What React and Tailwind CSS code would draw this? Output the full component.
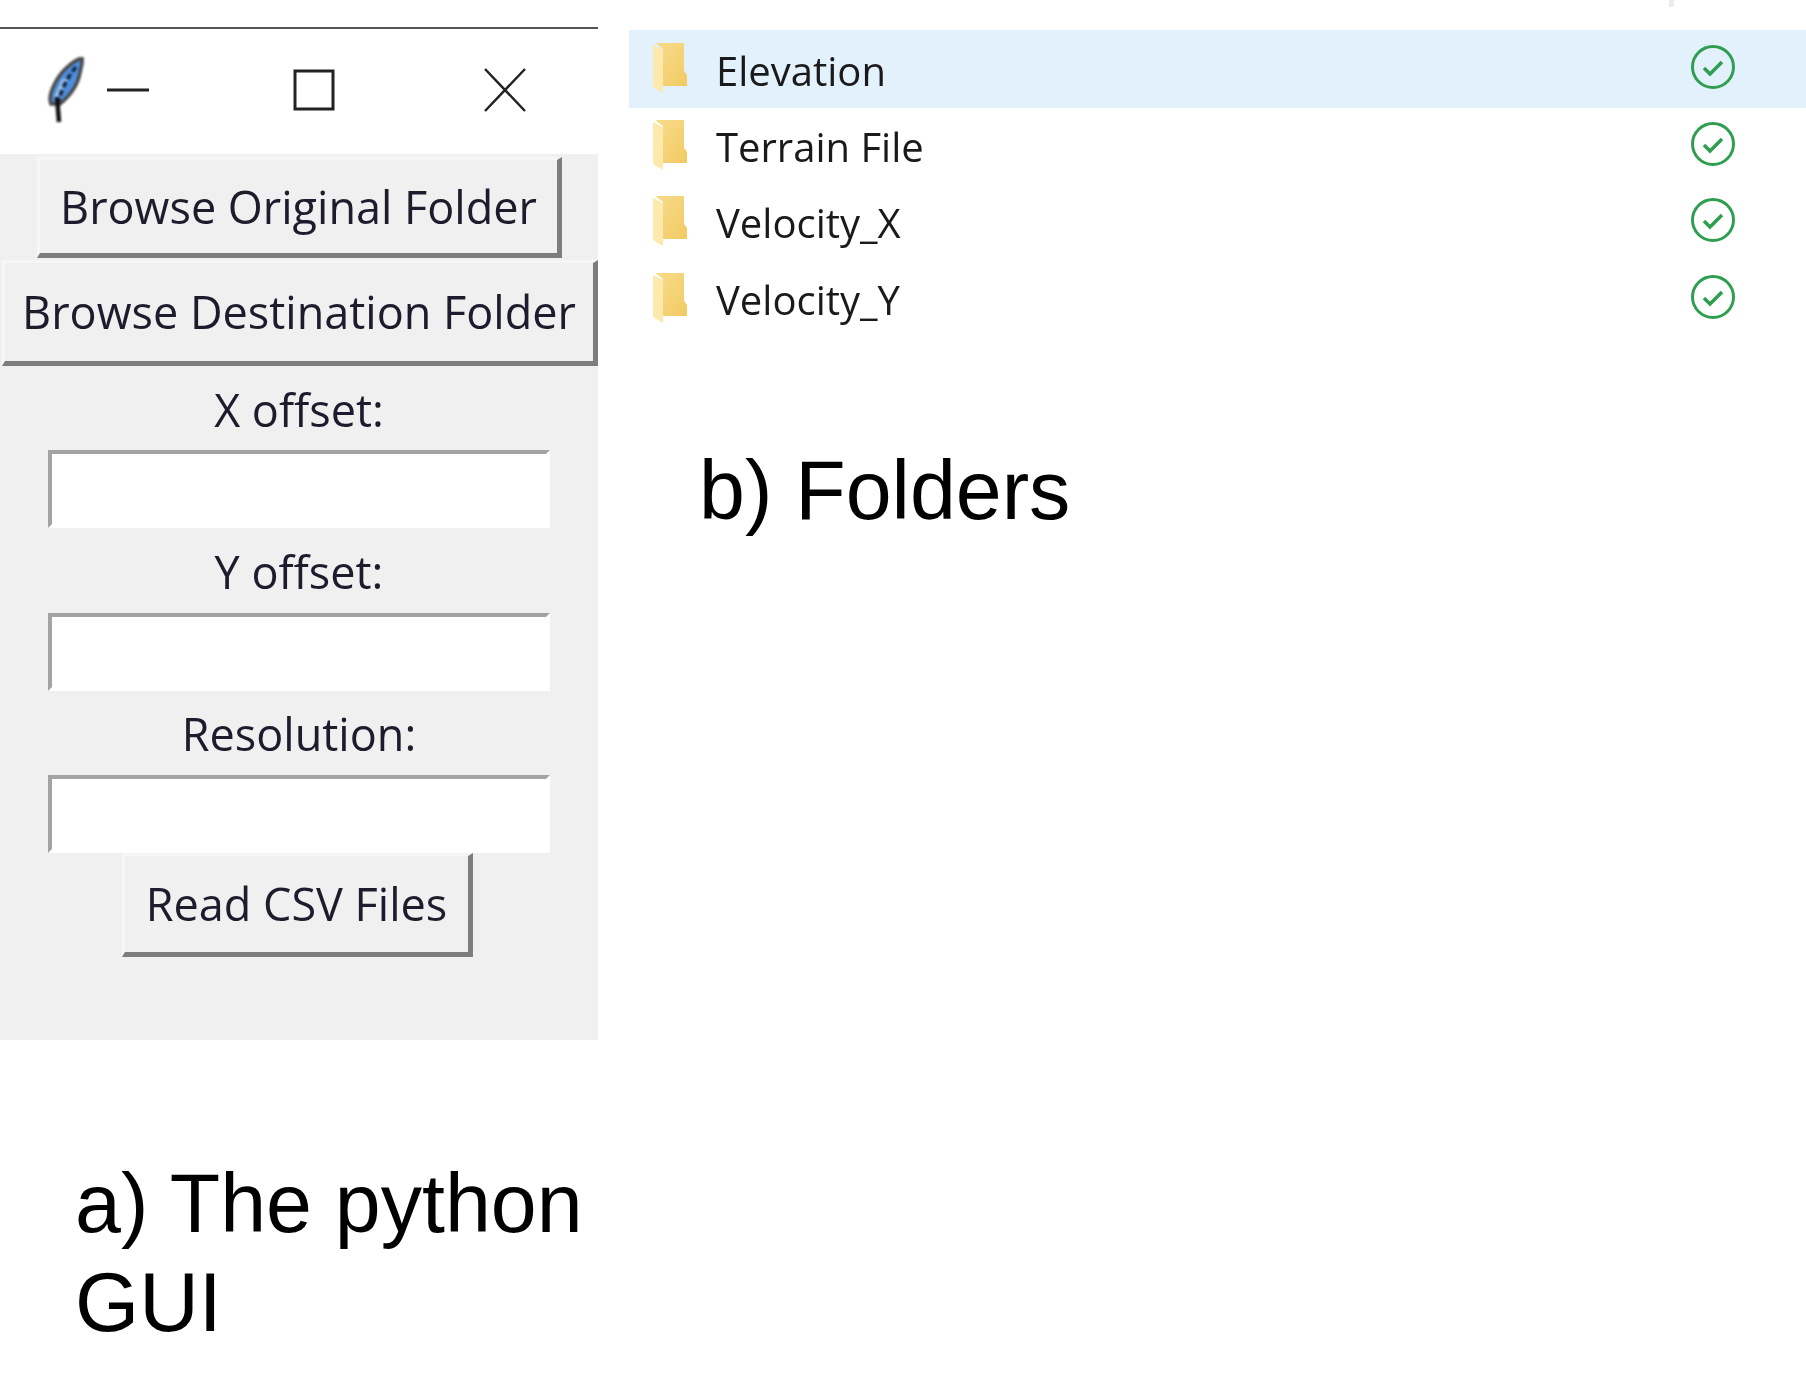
import React from "react";

const uiFont = "[font-family:'Open_Sans','Noto_Sans',sans-serif]";

const folders = ["Elevation", "Terrain File", "Velocity_X", "Velocity_Y"];

function Feather() {
  return (
    <svg width="40" height="66" viewBox="0 0 40 66" className="blur-[0.9px]">
      <path d="M36 1 C26 4 14 15 8 28 C4 36 3 42 5 47 L14 47 C25 38 32 27 34 16 C35 10 37 6 36 1 Z" fill="#4f8edc" stroke="#4a4a4a" strokeWidth="3.5" />
      <path d="M16 22 L8 40 L12 42 L22 22 Z" fill="#9cc0ec" />
      <path d="M30 10 C22 20 16 30 12 46" fill="none" stroke="#15233a" strokeWidth="3.5" strokeDasharray="6 3" />
      <path d="M11 40 L13 65" stroke="#111" strokeWidth="4.5" />
    </svg>
  );
}

function WinButton({ children, width }) {
  return (
    <svg width={width} height="46" viewBox={`0 0 ${width} 46`} className="blur-[0.4px]" fill="none" stroke="#222">
      {children}
    </svg>
  );
}

function TkButton({ label, className }) {
  return (
    <button className={`block bg-[#f0f0f0] border-t-[3px] border-l-[3px] border-r-[5px] border-b-[5px] border-t-[#f6f6f6] border-l-[#f6f6f6] border-r-[#7d7d7d] border-b-[#7d7d7d] text-[#1c1c2c] text-[45px] font-medium text-center whitespace-nowrap blur-[0.5px] ${className}`}>
      {label}
    </button>
  );
}

function Entry() {
  return (
    <div className="mx-auto w-[502px] h-[78px] bg-white border-4 border-t-[#a3a3a3] border-l-[#a3a3a3] border-r-white border-b-white blur-[0.4px]" />
  );
}

function FieldLabel({ children }) {
  return (
    <div className="h-[84.4px] flex items-center justify-center pt-[2px] text-[#1c1c2c] text-[45px] font-medium leading-none">
      <span className="blur-[0.5px]">{children}</span>
    </div>
  );
}

function FolderIcon() {
  return (
    <svg width="34" height="50" viewBox="0 0 34 50" className="blur-[0.6px] shrink-0">
      <defs>
        <linearGradient id="folderBack" x1="0" y1="0" x2="1" y2="1">
          <stop offset="0" stopColor="#f8dc8c" />
          <stop offset="1" stopColor="#f2ca62" />
        </linearGradient>
      </defs>
      <path d="M2 0 H31 V28 L34 32 V43 H10 V6 Z" fill="url(#folderBack)" />
      <path d="M0 2 L10 7 V50 L0 44 Z" fill="#fde9ab" />
    </svg>
  );
}

function CheckCircleIcon() {
  return (
    <svg width="46" height="46" viewBox="0 0 46 46" fill="none" stroke="#2f9e50" className="blur-[0.4px] shrink-0">
      <circle cx="23" cy="23" r="20.5" strokeWidth="3" />
      <path d="M14 24 L20 30 L32 18" strokeWidth="3.5" />
    </svg>
  );
}

export default function App() {
  return (
    <div className={`relative flex w-[1806px] h-[1400px] bg-white ${uiFont}`}>
      {/* Left side: python GUI */}
      <div className="w-[598px] shrink-0 pt-[27px]">
        <div className="h-[2px] bg-[#555]" />

        {/* Title bar */}
        <div className="h-[125px] flex items-center pb-[3px]">
          <div className="ml-[46px] w-[40px]">
            <Feather />
          </div>
          <div className="ml-[20px]">
            <WinButton width={44}>
              <path d="M1 23 H43" strokeWidth="3" />
            </WinButton>
          </div>
          <div className="ml-[143px]">
            <WinButton width={42}>
              <rect x="2" y="4" width="38" height="38" strokeWidth="3" />
            </WinButton>
          </div>
          <div className="ml-[148px]">
            <WinButton width={44}>
              <path d="M2 2 L42 44 M42 2 L2 44" strokeWidth="2.5" />
            </WinButton>
          </div>
        </div>

        {/* Window body */}
        <div className="h-[886px] bg-[#f0f0f0] pt-[3px]">
          <TkButton label="Browse Original Folder" className="ml-[37px] w-[525px] h-[101px]" />
          <TkButton label="Browse Destination Folder" className="ml-[2px] mt-[2px] w-[596px] h-[106px]" />
          <FieldLabel>X offset:</FieldLabel>
          <Entry />
          <FieldLabel>Y offset:</FieldLabel>
          <Entry />
          <FieldLabel>Resolution:</FieldLabel>
          <Entry />
          <TkButton label="Read CSV Files" className="ml-[122px] w-[351px] h-[104px]" />
        </div>

        <div className="mt-[114px] pl-[75px] [font-family:'Liberation_Sans',Arial,sans-serif] text-[82.5px] leading-[99px] text-black">
          a) The python
          <br />
          GUI
        </div>
      </div>

      {/* Right side: folders */}
      <div className="flex-1 ml-[31px] pt-[30px]">
        <div className="absolute top-0 left-[1669px] w-[5px] h-[7px] bg-[#ececec]" />
        {folders.map((name, i) => (
          <div
            key={name}
            className={`pl-[24px] flex items-start ${i === 0 ? "h-[78px] -mb-[1px] bg-[#e3f1fd]" : "h-[76.3px]"}`}
          >
            <div className="mt-[13px]">
              <FolderIcon />
            </div>
            <span className={`ml-[29px] text-[40px] font-medium leading-[56px] text-[#1a1a1a] blur-[0.4px] ${i === 0 ? "mt-[13px]" : "mt-[12px]"}`}>{name}</span>
            <div className="ml-auto mr-[70px] mt-[14px]">
              <CheckCircleIcon />
            </div>
          </div>
        ))}
        <div className="mt-[105px] pl-[70px] [font-family:'Liberation_Sans',Arial,sans-serif] text-[82.5px] leading-[99px] text-black">
          b) Folders
        </div>
      </div>
    </div>
  );
}
